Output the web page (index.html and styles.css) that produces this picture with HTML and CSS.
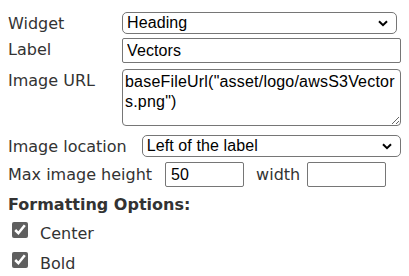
FILE: index.html
```html
<!DOCTYPE html>
<html>
<head>
	<title>Widget settings</title>
	<link rel="stylesheet" href="styles.css">
</head>
<body>
	<div class="settings">
		<div class="field">
			<label for="widget">Widget</label>
			<div class="select-wrap wide">
				<select id="widget">
					<option>Heading</option>
				</select>
				<svg class="chevron" width="10" height="7" viewBox="0 0 10 7"><path d="M1 1.2 L5 5.2 L9 1.2" fill="none" stroke="#000" stroke-width="2"/></svg>
			</div>
		</div>
		<div class="field row-label">
			<label for="label">Label</label>
			<input type="text" id="label" class="text-long" value="Vectors">
		</div>
		<div class="field row-url">
			<label for="image-url">Image URL</label>
			<textarea id="image-url">baseFileUrl("asset/logo/awsS3Vectors.png")</textarea>
		</div>

		<div class="inline row-location">
			<label for="location">Image location</label>
			<div class="select-wrap location">
				<select id="location">
					<option>Left of the label</option>
				</select>
				<svg class="chevron" width="10" height="7" viewBox="0 0 10 7"><path d="M1 1.2 L5 5.2 L9 1.2" fill="none" stroke="#000" stroke-width="2"/></svg>
			</div>
		</div>
		<div class="inline row-size">
			<label for="max-height">Max image height</label>
			<input type="text" id="max-height" class="small height-input" value="50">
			<label for="max-width" class="width-label">width</label>
			<input type="text" id="max-width" class="small width-input" value="">
		</div>

		<div class="section-title">Formatting Options:</div>
		<div class="check first">
			<input type="checkbox" id="center" checked>
			<label for="center">Center</label>
		</div>
		<div class="check">
			<input type="checkbox" id="bold" checked>
			<label for="bold">Bold</label>
		</div>
	</div>
</body>
</html>
```

FILE: styles.css
```css
body {
	margin: 0;
	padding: 12px 8px 0 8px;
	font-family: "DejaVu Sans", Verdana, sans-serif;
	font-size: 16px;
	line-height: 19px;
	color: #333;
	background: #fff;
}

select, input[type="text"], textarea {
	font-family: "Liberation Sans", Arial, sans-serif;
	font-size: 16px;
	color: #000;
	background: #fff;
	border: 1px solid #767676;
	box-sizing: border-box;
	margin: 0;
	letter-spacing: 0.1px;
}

.field {
	display: flex;
	align-items: flex-start;
}

.field label {
	flex: none;
	width: 114px;
	padding-top: 2px;
}

.row-label {
	margin-top: 4px;
}

.row-url {
	margin-top: 6px;
}

.select-wrap {
	position: relative;
	display: flex;
}

.select-wrap select {
	appearance: none;
	-webkit-appearance: none;
	width: 100%;
	height: 22px;
	border-radius: 5px;
	padding: 0 24px 0 4px;
	line-height: 20px;
}

.chevron {
	position: absolute;
	right: 9px;
	top: 8px;
	pointer-events: none;
}

.wide {
	width: 275px;
}

.field .text-long {
	width: 283px;
	height: 25px;
	border-radius: 2px;
	padding: 0 4px;
}

textarea {
	width: 281px;
	height: 57px;
	border-radius: 4px;
	padding: 2px;
	line-height: 20px;
	letter-spacing: 0.2px;
	resize: vertical;
}

.inline {
	display: flex;
	align-items: center;
}

.row-location {
	margin-top: 9px;
}

.location {
	width: 259px;
	margin-left: 15px;
}

.row-size {
	margin-top: 5px;
}

.row-size .small {
	flex: none;
	width: 79px;
	height: 25px;
	border-radius: 2px;
	padding: 0 5px;
}

.row-size .height-input {
	margin-left: 13px;
}

.row-size .width-label {
	margin-left: 12px;
}

.row-size .width-input {
	margin-left: 7px;
}

.section-title {
	margin-top: 8px;
	font-weight: bold;
}

.check {
	display: flex;
	align-items: flex-start;
	padding-left: 4px;
	margin-top: 9px;
}

.check.first {
	margin-top: 8px;
}

.check input {
	width: 16px;
	height: 16px;
	margin: 0 12px 0 0;
	accent-color: #5f5f5f;
}

.check label {
	padding-top: 2px;
}
```
